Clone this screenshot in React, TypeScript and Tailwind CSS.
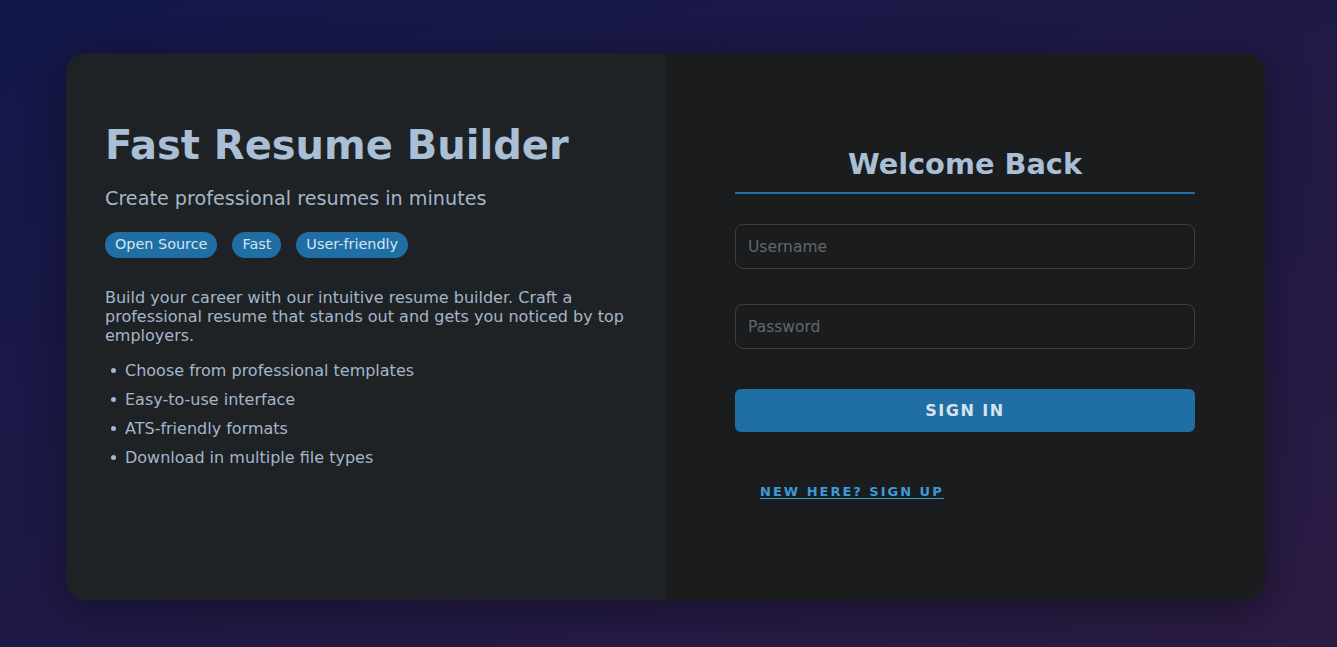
import React from 'react';

const tags = ['Open Source', 'Fast', 'User-friendly'];

const features = [
  'Choose from professional templates',
  'Easy-to-use interface',
  'ATS-friendly formats',
  'Download in multiple file types',
];

export default function App() {
  return (
    <div
      className="min-h-[647px] w-full pl-[66px] pt-[53px] bg-gradient-to-br from-[#121749] to-[#2b1b42] text-[#a9bed3]"
      style={{ fontFamily: '"DejaVu Sans", sans-serif' }}
    >
      {/* Card */}
      <div className="w-[1199px] h-[547px] flex rounded-[20px] overflow-hidden shadow-[0_10px_40px_rgba(0,0,0,0.35)]">
        {/* Left: intro */}
        <div className="w-[599px] bg-[#1f2224] pl-[39px] pr-10 pt-[68px]">
          <h1 className="text-[40px] font-bold leading-[48px] text-[#a9bfd6]">Fast Resume Builder</h1>
          <p className="mt-[18px] text-[19.2px] leading-6 text-[#a3b6ca]">Create professional resumes in minutes</p>

          <div className="mt-[21px] flex gap-[15px]">
            {tags.map((t) => (
              <span
                key={t}
                className="h-[26px] px-[10px] flex items-center rounded-full bg-[#1f6fa5] text-[14.4px] text-[#d6e4f0]"
              >
                {t}
              </span>
            ))}
          </div>

          <p className="mt-[30px] text-[16px] leading-[19px] text-[#a3b6ca]">
            Build your career with our intuitive resume builder. Craft a professional resume that stands out and gets
            you noticed by top employers.
          </p>

          <ul className="mt-[16px] flex flex-col gap-[10px] text-[16px] leading-[19px] text-[#a3b6ca]">
            {features.map((f) => (
              <li key={f} className="flex items-center gap-[9px] pl-[6px]">
                <span className="w-[5px] h-[5px] rounded-full bg-[#a3b6ca]" />
                {f}
              </li>
            ))}
          </ul>
        </div>

        {/* Right: sign in form */}
        <div className="flex-1 bg-[#1b1c1e] px-[70px] pt-[94px]">
          <h2 className="text-center text-[28.8px] font-bold leading-[34px] text-[#a9bfd6]">Welcome Back</h2>
          <div className="mt-[11px] h-[2px] bg-[#1f6fa5]" />

          <form className="mt-[30px] flex flex-col" onSubmit={(e) => e.preventDefault()}>
            <input
              placeholder="Username"
              className="h-[45px] rounded-[8px] border border-[#3b3f42] bg-[#1a1c1e] px-3 text-[15.5px] text-[#a9bed3] placeholder:text-[#62676b] outline-none"
            />
            <input
              type="password"
              placeholder="Password"
              className="mt-[35px] h-[45px] rounded-[8px] border border-[#3b3f42] bg-[#1a1c1e] px-3 text-[15.5px] text-[#a9bed3] placeholder:text-[#62676b] outline-none"
            />
            <button
              type="submit"
              className="mt-[40px] h-[43px] rounded-[6px] bg-[#1f6fa5] text-[16px] font-bold tracking-[1.5px] text-[#d9e3ec]"
            >
              SIGN IN
            </button>
          </form>

          <div className="mt-[47px] pl-[25px]">
            <a
              href="#"
              className="text-[13px] font-bold tracking-[2px] text-[#3c9ad8] underline underline-offset-2"
            >
              NEW HERE? SIGN UP
            </a>
          </div>
        </div>
      </div>
    </div>
  );
}
